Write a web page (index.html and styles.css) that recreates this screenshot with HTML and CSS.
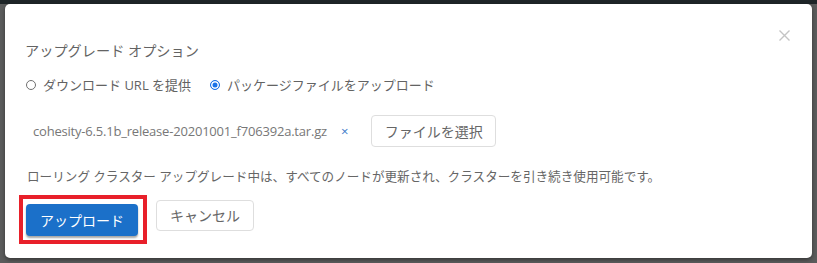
FILE: index.html
```html
<!DOCTYPE html>
<html lang="ja">
<head>
<meta charset="utf-8">
<link rel="stylesheet" href="styles.css">
</head>
<body>
<div class="topbar"></div>
<div class="modal">
  <button class="close" aria-label="close">
    <svg width="11" height="11" viewBox="0 0 11 11"><path d="M0.5 0.5 L10.5 10.5 M10.5 0.5 L0.5 10.5" stroke="#c4c4c4" stroke-width="1.4" fill="none"/></svg>
  </button>
  <h2 class="title">アップグレード オプション</h2>
  <div class="radios">
    <label class="radio"><span class="dot"></span>ダウンロード URL を提供</label>
    <label class="radio checked"><span class="dot"></span>パッケージファイルをアップロード</label>
  </div>
  <div class="file-row">
    <span class="file-name">cohesity-6.5.1b_release-20201001_f706392a.tar.gz</span>
    <span class="file-x">×</span>
    <button class="btn btn-light btn-file">ファイルを選択</button>
  </div>
  <p class="desc">ローリング クラスター アップグレード中は、すべてのノードが更新され、クラスターを引き続き使用可能です。</p>
  <div class="actions">
    <div class="highlight"><button class="btn btn-primary">アップロード</button></div>
    <button class="btn btn-light btn-cancel">キャンセル</button>
  </div>
</div>
</body>
</html>
```

FILE: styles.css
```css
html, body {
  margin: 0;
  padding: 0;
}
body {
  width: 817px;
  height: 263px;
  overflow: hidden;
  background: #5b5c5c;
  font-family: "Open Sans", "Noto Sans CJK JP", sans-serif;
  color: #636363;
}
.topbar {
  height: 4px;
  background: #1e2528;
}
.modal {
  position: relative;
  margin-left: 5px;
  width: 807px;
  height: 254px;
  box-sizing: border-box;
  background: #fff;
  border-radius: 5px;
  padding: 38px 20px 0 20px;
  box-shadow: 0 2px 4px rgba(0,0,0,0.4);
}
.close {
  position: absolute;
  top: 26px;
  right: 22px;
  border: 0;
  background: none;
  padding: 0;
  width: 11px;
  height: 11px;
  line-height: 0;
}
.title {
  margin: 0;
  font-size: 14.2px;
  font-weight: normal;
  line-height: 18px;
  color: #636363;
}
.radios {
  display: flex;
  gap: 18px;
  margin-top: 16px;
  font-size: 13px;
  line-height: 18px;
}
.radio {
  display: flex;
  align-items: center;
  gap: 7px;
}
.dot {
  width: 8px;
  height: 8px;
  border: 1px solid #707070;
  border-radius: 50%;
  box-sizing: content-box;
  margin-left: 1px;
}
.radio.checked .dot {
  border-color: #1a73e8;
  background: #1a73e8;
  box-shadow: inset 0 0 0 1.5px #fff;
}
.file-row {
  display: flex;
  align-items: center;
  margin-top: 21px;
  padding-left: 8px;
  height: 32px;
}
.file-name {
  font-size: 13px;
  color: #777;
  letter-spacing: -0.2px;
}
.file-x {
  color: #3b78c8;
  font-size: 13px;
  margin-left: 14px;
}
.btn {
  font-family: "Open Sans", "Noto Sans CJK JP", sans-serif;
  border-radius: 4px;
  cursor: pointer;
}
.btn-light {
  background: #fff;
  border: 1px solid #dedede;
  color: #666;
  font-size: 14px;
}
.btn-file {
  margin-left: 23px;
  width: 125px;
  height: 32px;
}
.desc {
  margin: 21px 0 0 2px;
  font-size: 12.6px;
  line-height: 18px;
  color: #666;
}
.actions {
  display: flex;
  align-items: center;
  margin-top: 9px;
  margin-left: -6px;
  gap: 9px;
}
.highlight {
  border: 4px solid #e8202a;
  padding: 5px 5px 4px 3px;
  box-sizing: border-box;
  width: 128px;
  height: 49px;
}
.btn-primary {
  width: 112px;
  height: 32px;
  background: #1b70c9;
  border: 0;
  color: #fff;
  font-size: 14px;
  box-shadow: 0 2px 2px rgba(0,0,0,0.35);
}
.btn-cancel {
  width: 98px;
  height: 31px;
  margin-top: -9px;
}
```
